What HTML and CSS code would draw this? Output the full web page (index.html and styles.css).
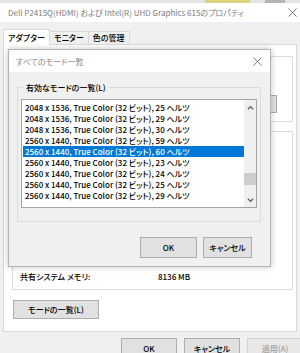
FILE: index.html
```html
<!DOCTYPE html>
<html lang="ja">
<head>
    <meta charset="UTF-8">
    <meta name="viewport" content="width=device-width, initial-scale=1.0">
    <title>プロパティ</title>
    <link rel="stylesheet" href="styles.css">
</head>
<body>
    <div class="desktop-strip">
        <span class="strip-yellow"></span>
        <span class="strip-gray"></span>
    </div>

    <div class="window">
        <div class="titlebar">
            <span class="title">Dell P2415Q(HDMI) および Intel(R) UHD Graphics 615のプロパティ</span>
            <svg class="close-icon" viewBox="0 0 10 10"><path d="M0.5 0.5L9.5 9.5M9.5 0.5L0.5 9.5"/></svg>
        </div>

        <div class="tabs">
            <div class="tab active">アダプター</div>
            <div class="tab">モニター</div>
            <div class="tab">色の管理</div>
        </div>

        <div class="panel">
            <fieldset class="group group-type">
                <legend>アダプターの種類</legend>
                <div class="adapter-name">Intel(R) UHD Graphics 615</div>
                <div class="adapter-actions">
                    <button class="btn btn-props">プロパティ(P)</button>
                </div>
            </fieldset>

            <fieldset class="group group-info">
                <legend>アダプター情報</legend>
                <div class="info-rows">
                    <div class="info-row"><span class="info-label">チップの種類:</span><span>Intel(R) UHD Graphics</span></div>
                    <div class="info-row"><span class="info-label">DAC の種類:</span><span>Internal</span></div>
                    <div class="info-row"><span class="info-label">アダプター文字列:</span><span>Intel(R) UHD Graphics 615</span></div>
                    <div class="info-row"><span class="info-label">BIOS 情報:</span><span>Intel Video BIOS</span></div>
                    <div class="info-row"><span class="info-label">利用可能なグラフィックス メモリの合計:</span><span>8264 MB</span></div>
                    <div class="info-row"><span class="info-label">専用ビデオ メモリ:</span><span>128 MB</span></div>
                    <div class="info-row"><span class="info-label">システム ビデオ メモリ:</span><span>0 MB</span></div>
                    <div class="info-row"><span class="info-label">共有システム メモリ:</span><span>8136 MB</span></div>
                </div>
            </fieldset>

            <button class="btn btn-modes">モードの一覧(L)</button>
        </div>

        <div class="footer">
            <button class="btn btn-footer">OK</button>
            <button class="btn btn-footer">キャンセル</button>
            <button class="btn btn-footer" disabled>適用(A)</button>
        </div>
    </div>

    <div class="modal">
        <div class="modal-titlebar">
            <span class="modal-title">すべてのモード一覧</span>
            <svg class="close-icon" viewBox="0 0 10 10"><path d="M0.5 0.5L9.5 9.5M9.5 0.5L0.5 9.5"/></svg>
        </div>
        <div class="modal-body">
            <fieldset class="group group-modes">
                <legend>有効なモードの一覧(L)</legend>
                <div class="listbox">
                    <ul class="mode-list">
                        <li>2048 x 1536, True Color (32 ビット), 25 ヘルツ</li>
                        <li>2048 x 1536, True Color (32 ビット), 29 ヘルツ</li>
                        <li>2048 x 1536, True Color (32 ビット), 30 ヘルツ</li>
                        <li>2560 x 1440, True Color (32 ビット), 59 ヘルツ</li>
                        <li class="selected">2560 x 1440, True Color (32 ビット), 60 ヘルツ</li>
                        <li>2560 x 1440, True Color (32 ビット), 23 ヘルツ</li>
                        <li>2560 x 1440, True Color (32 ビット), 24 ヘルツ</li>
                        <li>2560 x 1440, True Color (32 ビット), 25 ヘルツ</li>
                        <li>2560 x 1440, True Color (32 ビット), 29 ヘルツ</li>
                    </ul>
                    <div class="scrollbar">
                        <div class="scroll-btn">
                            <svg viewBox="0 0 8 5"><path d="M1 4.5L4 1.5L7 4.5"/></svg>
                        </div>
                        <div class="scroll-track"><div class="scroll-thumb"></div></div>
                        <div class="scroll-btn">
                            <svg viewBox="0 0 8 5"><path d="M1 0.5L4 3.5L7 0.5"/></svg>
                        </div>
                    </div>
                </div>
            </fieldset>
            <div class="modal-buttons">
                <button class="btn btn-ok">OK</button>
                <button class="btn btn-cancel">キャンセル</button>
            </div>
        </div>
    </div>
</body>
</html>
```

FILE: styles.css
```css
* {
    box-sizing: border-box;
}

body {
    margin: 0;
    width: 300px;
    height: 353px;
    overflow: hidden;
    position: relative;
    background: #f0f0f0;
    font-family: "Noto Sans CJK JP", "Noto Sans", sans-serif;
    font-size: 8px;
    font-weight: 500;
    font-feature-settings: "palt";
    color: #000;
}

.desktop-strip {
    height: 3px;
    display: flex;
    background: #e4e4e0;
}

.strip-yellow {
    margin-left: 205px;
    width: 45px;
    background: #dcd67c;
}

.strip-gray {
    margin-left: 15px;
    width: 20px;
    background: #b5b5b5;
}

.window {
    width: 306px;
}

.titlebar {
    height: 19px;
    background: #fff;
    display: flex;
    align-items: center;
    justify-content: space-between;
    padding: 0 3px 0 8px;
    width: 300px;
}

.title {
    color: #7c7c7c;
    font-weight: 400;
    white-space: nowrap;
}

.close-icon {
    width: 9px;
    height: 9px;
    fill: none;
    stroke: #707070;
    stroke-width: 1;
}

.tabs {
    height: 22px;
    display: flex;
    align-items: flex-end;
    padding-left: 3px;
}

.tab {
    height: 13px;
    line-height: 12px;
    padding: 0 4px;
    border: 1px solid #d9d9d9;
    border-bottom: none;
    margin-right: -1px;
}

.tab.active {
    height: 16px;
    line-height: 15px;
    margin-bottom: -1px;
    background: #fff;
    position: relative;
    z-index: 1;
}

.panel {
    margin: 0 3px;
    width: 294px;
    height: 288px;
    background: #fff;
    border: 1px solid #d9d9d9;
    padding: 6px 3px 0 8px;
}

.group {
    margin: 0;
    min-width: 0;
    border: 1px solid #dcdcdc;
}

.group legend {
    padding: 0 2px;
    margin-left: 3px;
    line-height: 11px;
}

.group-type {
    padding: 9px 15px 8px 7px;
}

.adapter-name {
    height: 24px;
    line-height: 24px;
    padding-left: 30px;
}

.adapter-actions {
    display: flex;
    justify-content: flex-end;
}

.btn {
    font-family: inherit;
    font-size: 8px;
    font-weight: 500;
    font-feature-settings: "palt";
    color: #000;
    background: #e1e1e1;
    border: 1px solid #adadad;
    padding: 0;
}

.btn:disabled {
    background: #e8e8e8;
    border-color: #d2d2d2;
    color: #a3a3a3;
}

.btn-props {
    width: 66px;
    height: 18px;
}

.group-info {
    margin-top: 4px;
    padding: 4px 7px 6px;
}

.info-rows {
    height: 142px;
    display: flex;
    flex-direction: column;
    justify-content: flex-end;
    gap: 4px;
}

.info-row {
    display: flex;
    line-height: 13px;
    white-space: nowrap;
}

.info-label {
    width: 138px;
}

.btn-modes {
    display: block;
    margin: 10px 0 0 1px;
    width: 86px;
    height: 19px;
}

.footer {
    display: flex;
    gap: 7px;
    padding: 6px 0 0 121px;
}

.btn-footer {
    width: 56px;
    height: 20px;
    flex-shrink: 0;
}

/* modal dialog over the property sheet */
.modal {
    position: absolute;
    left: 8px;
    top: 49px;
    width: 263px;
    height: 218px;
    border: 1px solid #b4b4b4;
    background: #f0f0f0;
    box-shadow: 0 0 6px rgba(0, 0, 0, 0.25);
}

.modal-titlebar {
    height: 22px;
    background: #fff;
    display: flex;
    align-items: center;
    justify-content: space-between;
    padding: 0 8px 0 7px;
}

.modal-title {
    color: #8a8a8a;
    font-weight: 400;
}

.modal-body {
    padding: 10px 9px 0 8px;
}

.group-modes {
    padding: 6px 3px 13px 3px;
}

.listbox {
    height: 109px;
    display: flex;
    background: #fff;
    border: 1px solid #a5a5a5;
}

.mode-list {
    flex: 1;
    margin: 0;
    padding: 2px 0 0 1px;
    list-style: none;
    overflow: hidden;
}

.mode-list li {
    height: 11px;
    line-height: 11px;
    padding-left: 2px;
    white-space: nowrap;
}

.mode-list li.selected {
    background: #0078d7;
    color: #fff;
}

.scrollbar {
    width: 12px;
    display: flex;
    flex-direction: column;
    background: #f0f0f0;
}

.scroll-btn {
    height: 14px;
    display: flex;
    align-items: center;
    justify-content: center;
}

.scroll-btn svg {
    width: 7px;
    height: 5px;
    fill: none;
    stroke: #5a5a5a;
    stroke-width: 1.3;
}

.scroll-track {
    flex: 1;
}

.scroll-thumb {
    margin-top: 59px;
    height: 12px;
    background: #cdcdcd;
}

.modal-buttons {
    display: flex;
    justify-content: flex-end;
    gap: 6px;
    margin-top: 15px;
    padding-right: 9px;
}

.btn-ok {
    width: 57px;
    height: 21px;
}

.btn-cancel {
    width: 49px;
    height: 21px;
}
```
